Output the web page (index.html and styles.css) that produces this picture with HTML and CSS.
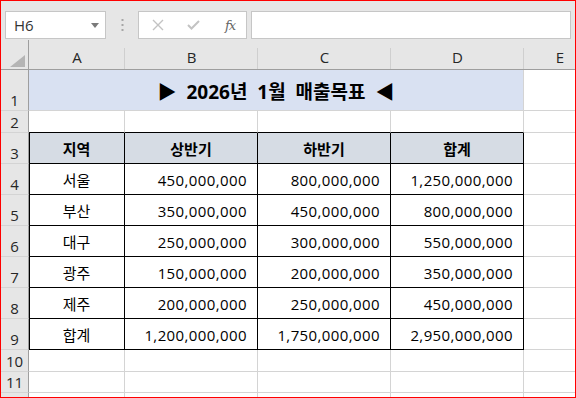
FILE: index.html
```html
<!DOCTYPE html>
<html lang="ko">
<head>
    <meta charset="UTF-8">
    <meta name="viewport" content="width=device-width, initial-scale=1.0">
    <title>2026년 1월 매출목표</title>
    <link rel="stylesheet" href="styles.css">
</head>
<body>
<div class="window">
    <div class="toolbar">
        <div class="name-box">
            <span>H6</span>
            <svg class="drop" width="8" height="5" viewBox="0 0 8 5"><path d="M0 0H8L4 5Z" fill="#7a7a7a"/></svg>
        </div>
        <svg class="grip" width="3" height="12" viewBox="0 0 3 12">
            <rect x="0.5" y="0" width="2" height="2" fill="#a6a6a6"/>
            <rect x="0.5" y="5" width="2" height="2" fill="#a6a6a6"/>
            <rect x="0.5" y="10" width="2" height="2" fill="#a6a6a6"/>
        </svg>
        <div class="fx-box">
            <svg width="12" height="12" viewBox="0 0 12 12"><path d="M1 1L11 11M11 1L1 11" stroke="#c3c3c3" stroke-width="1.4"/></svg>
            <svg width="13" height="10" viewBox="0 0 13 10"><path d="M1 5L4.5 8.5L12 1" stroke="#c3c3c3" stroke-width="2" fill="none"/></svg>
            <span class="fx">fx</span>
        </div>
        <div class="formula"></div>
    </div>

    <div class="sheet">
        <!-- column headers -->
        <div class="corner"><svg width="15" height="12" viewBox="0 0 15 12"><path d="M15 0V12H0Z" fill="#b4b4b4"/></svg></div>
        <div class="ch">A</div>
        <div class="ch">B</div>
        <div class="ch">C</div>
        <div class="ch">D</div>
        <div class="ch">E</div>

        <!-- row 1 -->
        <div class="rh">1</div>
        <div class="c title">▶ 2026년 1월 매출목표 ◀</div>
        <div class="c"></div>

        <!-- row 2 -->
        <div class="rh">2</div>
        <div class="c top"></div>
        <div class="c top"></div>
        <div class="c top"></div>
        <div class="c top"></div>
        <div class="c"></div>

        <!-- row 3 -->
        <div class="rh">3</div>
        <div class="c t th first">지역</div>
        <div class="c t th">상반기</div>
        <div class="c t th">하반기</div>
        <div class="c t th">합계</div>
        <div class="c"></div>

        <div class="rh">4</div>
        <div class="c t first">서울</div>
        <div class="c t num">450,000,000</div>
        <div class="c t num">800,000,000</div>
        <div class="c t num">1,250,000,000</div>
        <div class="c"></div>

        <div class="rh">5</div>
        <div class="c t first">부산</div>
        <div class="c t num">350,000,000</div>
        <div class="c t num">450,000,000</div>
        <div class="c t num">800,000,000</div>
        <div class="c"></div>

        <div class="rh">6</div>
        <div class="c t first">대구</div>
        <div class="c t num">250,000,000</div>
        <div class="c t num">300,000,000</div>
        <div class="c t num">550,000,000</div>
        <div class="c"></div>

        <div class="rh">7</div>
        <div class="c t first">광주</div>
        <div class="c t num">150,000,000</div>
        <div class="c t num">200,000,000</div>
        <div class="c t num">350,000,000</div>
        <div class="c"></div>

        <div class="rh">8</div>
        <div class="c t first">제주</div>
        <div class="c t num">200,000,000</div>
        <div class="c t num">250,000,000</div>
        <div class="c t num">450,000,000</div>
        <div class="c"></div>

        <div class="rh">9</div>
        <div class="c t first">합계</div>
        <div class="c t num">1,200,000,000</div>
        <div class="c t num">1,750,000,000</div>
        <div class="c t num">2,950,000,000</div>
        <div class="c"></div>

        <div class="rh">10</div>
        <div class="c"></div><div class="c"></div><div class="c"></div><div class="c"></div><div class="c"></div>

        <div class="rh">11</div>
        <div class="c"></div><div class="c"></div><div class="c"></div><div class="c"></div><div class="c"></div>

        <div class="rh"></div>
        <div class="c"></div><div class="c"></div><div class="c"></div><div class="c"></div><div class="c"></div>
    </div>
</div>
</body>
</html>
```

FILE: styles.css
```css
body {
    margin: 0;
    font-family: "Open Sans", "Noto Sans CJK KR", sans-serif;
}
.window {
    width: 576px;
    height: 398px;
    box-sizing: border-box;
    border: 1px solid #ff0000;
    background-color: #e6e6e6;
    overflow: hidden;
}
.toolbar {
    height: 39px;
    box-sizing: border-box;
    padding: 10px 4px 0 4px;
    display: flex;
    align-items: flex-start;
}
.name-box, .fx-box, .formula {
    height: 28px;
    box-sizing: border-box;
    border: 1px solid #c6c6c6;
    background-color: #fff;
}
.name-box {
    width: 101px;
    display: flex;
    align-items: center;
    justify-content: space-between;
    padding: 0 6px 0 8px;
    font-size: 15px;
    color: #333;
}
.grip {
    margin: 8px 0 0 15px;
}
.fx-box {
    width: 109px;
    margin-left: 14px;
    display: flex;
    align-items: center;
    padding-left: 13px;
}
.fx-box svg + svg {
    margin-left: 23px;
}
.fx {
    margin-left: 25px;
    font-family: "DejaVu Serif", serif;
    font-style: italic;
    font-size: 13px;
    color: #666;
    letter-spacing: -1px;
}
.formula {
    flex: 1;
    margin-left: 4px;
}

.sheet {
    display: grid;
    grid-template-columns: 28px 96px 133px 133px 133px 72px;
    grid-template-rows: 30px 41px 22px repeat(7, 31px) 22px 21px 21px;
    background-color: #fff;
}
.corner, .ch, .rh {
    background-color: #e6e6e6;
    color: #262626;
    font-size: 15px;
    box-sizing: border-box;
}
.corner {
    border-right: 1px solid #9e9e9e;
    border-bottom: 1px solid #9e9e9e;
    display: flex;
    align-items: flex-end;
    justify-content: flex-end;
    padding: 0 3px 2px 0;
}
.ch {
    border-bottom: 1px solid #9e9e9e;
    background: linear-gradient(#cfcfcf, #cfcfcf) right bottom / 1px 21px no-repeat, #e6e6e6;
    display: flex;
    align-items: flex-end;
    justify-content: center;
    padding-bottom: 3px;
    line-height: 18px;
}
.rh {
    border-right: 1px solid #9e9e9e;
    border-bottom: 1px solid #d4d4d4;
    display: flex;
    align-items: flex-end;
    justify-content: center;
    padding-bottom: 1px;
    line-height: 18px;
}
.c {
    box-sizing: border-box;
    border-right: 1px solid #d4d4d4;
    border-bottom: 1px solid #d4d4d4;
    display: flex;
    align-items: flex-end;
    justify-content: center;
    padding-bottom: 4px;
    font-size: 15px;
    line-height: 20px;
    color: #000;
}
.title {
    grid-column: span 4;
    background-color: #d9e1f2;
    font-size: 19px;
    font-weight: bold;
    padding-bottom: 7px;
    line-height: 22px;
    word-spacing: 5px;
}
.top {
    border-bottom-color: #000;
}
.t {
    border-right-color: #000;
    border-bottom-color: #000;
}
.first {
    box-shadow: inset 1px 0 0 #000;
}
.th {
    background-color: #d6dce4;
    font-weight: bold;
}
.num {
    justify-content: flex-end;
    padding-right: 10px;
    letter-spacing: 0.4px;
}
```
